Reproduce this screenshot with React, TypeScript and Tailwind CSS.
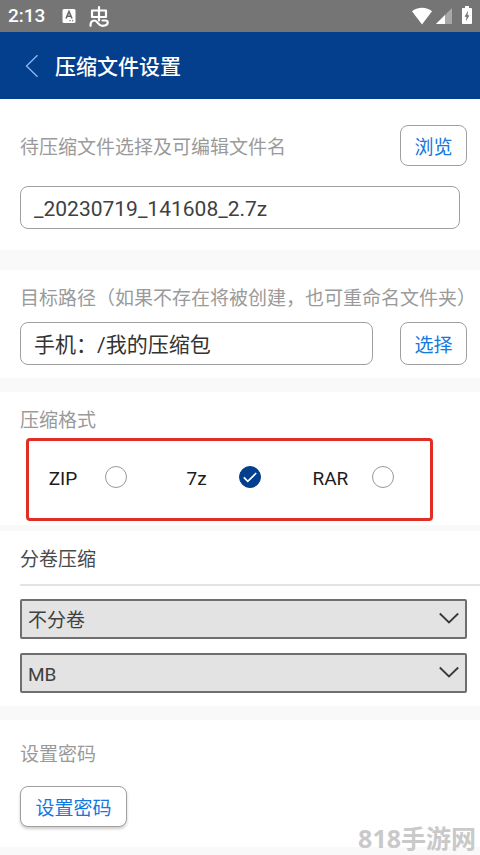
import {useState} from "react";
import type {ReactNode} from "react";

type FormatId = "zip" | "7z" | "rar";

const FORMATS: {id: FormatId; label: string}[] = [
    {id: "zip", label: "ZIP"},
    {id: "7z", label: "7z"},
    {id: "rar", label: "RAR"},
];

const StatusBar = () => (
    <div className="flex h-8 items-center bg-[#757575] pr-2 pl-2 text-white">
        <span className="text-[19px] leading-8 font-medium">2:13</span>
        <svg className="ml-4 h-4 w-4" viewBox="0 0 16 16" aria-hidden="true">
            <rect x="1.5" y="1" width="13" height="14" rx="1.5" fill="#fff" />
            <path d="M5 10.5 8 3.5l3 7M6 8.3h4" fill="none" stroke="#666" strokeWidth="1.6" />
            <path d="M8.5 12.7h1.2M11 12.7h1.2" stroke="#757575" strokeWidth="1.2" />
        </svg>
        <svg className="ml-3 h-6 w-5" viewBox="0 0 20 24" fill="none" stroke="#fff" strokeWidth="2.2" strokeLinecap="round" strokeLinejoin="round" aria-hidden="true">
            <path d="M3 6.500h14v6.500H3zM10 3v13.500" />
            <path d="M1.500 21.800c0-3.300 1.600-5.300 4-5.300 3.300 0 3.300 5.300 8 5.300 3.300 0 5.200-1.300 5.200-3.200 0-1.400-.9-2.100-2.200-2.100h-3" />
        </svg>
        <div className="ml-auto flex items-center">
            <svg className="h-5 w-5" viewBox="0 0 20 20" fill="#fff" aria-hidden="true">
                <path d="M10 18.500 0 5.200C2.600 3 6.100 1.800 10 1.800s7.400 1.200 10 3.400z" />
            </svg>
            <svg className="ml-1 h-5 w-4" viewBox="0 0 16 20" aria-hidden="true">
                <path d="M16 2v16H0z" fill="#a8a8a8" />
                <path d="M9 9v9H0z" fill="#fff" />
            </svg>
            <svg className="ml-2.5 h-5 w-2.5" viewBox="0 0 10 20" aria-hidden="true">
                <path d="M3 0h4v2h2.200c.5 0 .8.300.8.800v14.400c0 .5-.3.800-.8.800H.8c-.5 0-.8-.3-.8-.8V2.800c0-.5.300-.8.800-.8H3z" fill="#fff" />
                <path d="M6.200 4.500 2.500 10.800h2l-.7 4.700 3.700-6.300h-2z" fill="#757575" />
            </svg>
        </div>
    </div>
);

const Section = ({className, children}: {className: string; children: ReactNode}) => <section className={`bg-white pl-5 ${className}`}>{children}</section>;

const OutlineButton = ({className, children}: {className: string; children: ReactNode}) => (
    <button type="button" className={`shrink-0 rounded-lg border border-[#a0a0a0] bg-white pt-1.5 text-[19px] text-[#1378df] ${className}`}>
        {children}
    </button>
);

const SelectBox = ({label, options}: {label: string; options: string[]}) => (
    <div className="relative">
        <select aria-label={label} className="block h-10 w-full appearance-none rounded-xs border-2 border-[#6e6e6e] bg-[#e3e3e3] px-1.5 pt-1 text-[19px] text-[#404040]">
            {options.map(o => (
                <option key={o}>{o}</option>
            ))}
        </select>
        <svg className="pointer-events-none absolute top-[13px] right-2 h-3 w-5" viewBox="0 0 20 12" fill="none" stroke="#383838" strokeWidth="1.8" aria-hidden="true">
            <path d="M.8 1.500 10 10.500l9.200-9" />
        </svg>
    </div>
);

export default function App() {
    const [format, setFormat] = useState<FormatId>("7z");

    return (
        <main className="relative w-full overflow-x-hidden bg-[#f9f9f9] font-[Roboto,'Noto_Sans_CJK_SC',sans-serif]">
            <StatusBar />

            <header className="flex h-[67px] items-center bg-[#043f8e] pl-6 text-white">
                <button type="button" aria-label="返回" className="h-6 w-4">
                    <svg className="h-6 w-4" viewBox="0 0 16 24" fill="none" stroke="#8fb8f5" strokeWidth="1.300" aria-hidden="true">
                        <path d="M13.500 1.200 2.500 12l11 10.800" />
                    </svg>
                </button>
                <h1 className="ml-[15px] pt-1 text-[21px] font-medium">压缩文件设置</h1>
            </header>

            <Section className="pt-[26px] pr-5 pb-[21px]">
                <div className="-mr-[7px] flex items-center justify-between">
                    <label htmlFor="file-name" className="pt-1.5 text-[19px] whitespace-nowrap text-[#9a9a9a]">
                        待压缩文件选择及可编辑文件名
                    </label>
                    <OutlineButton className="h-[41px] w-[67px]">浏览</OutlineButton>
                </div>
                <input id="file-name" defaultValue="_20230719_141608_2.7z" className="mt-5 block h-[43px] w-full rounded-lg border border-[#a0a0a0] px-[13px] pt-0.5 text-[21px] text-[#404040]" />
            </Section>

            <Section className="mt-5 pt-3.5 pr-[13px] pb-[13px]">
                <label htmlFor="target-path" className="block text-[19px] leading-[29px] whitespace-nowrap text-[#9a9a9a]">
                    目标路径（如果不存在将被创建，也可重命名文件夹）
                </label>
                <div className="mt-[9px] flex gap-[27px]">
                    <input id="target-path" defaultValue="手机：/我的压缩包" className="h-[43px] min-w-0 flex-1 rounded-lg border border-[#a0a0a0] px-[13px] pb-0.5 text-[21px] text-[#333]" />
                    <OutlineButton className="h-[43px] w-[67px]">选择</OutlineButton>
                </div>
            </Section>

            <Section className="mt-3.5 pt-3.5 pb-1">
                <h2 className="text-[19px] leading-[29px] text-[#9a9a9a]">压缩格式</h2>
                <div role="radiogroup" aria-label="压缩格式" className="mt-[3px] mr-[47px] ml-1.5 grid grid-cols-3 rounded-sm border-3 border-[#e02e24] pt-[25px] pb-[30px]">
                    {FORMATS.map(f => (
                        <label key={f.id} className="flex h-[22px] items-center gap-2">
                            <span className="w-17 pt-1 text-center text-[19px] text-[#1c1c1c]">{f.label}</span>
                            <span className="grid h-[22px] w-[22px] place-items-center">
                                <input
                                    type="radio"
                                    name="format"
                                    checked={format === f.id}
                                    onChange={() => setFormat(f.id)}
                                    className="col-start-1 row-start-1 h-[22px] w-[22px] appearance-none rounded-full border border-[#999] checked:border-[#043f8e] checked:bg-[#043f8e]"
                                />
                                {format === f.id ? (
                                    <svg className="pointer-events-none z-10 col-start-1 row-start-1 h-[22px] w-[22px]" viewBox="0 0 22 22" fill="none" stroke="#fff" strokeWidth="1.700" aria-hidden="true">
                                        <path d="m4.800 11.300 4 4 8.400-8.300" />
                                    </svg>
                                ) : null}
                            </span>
                        </label>
                    ))}
                </div>
            </Section>

            <Section className="mt-1.5 pt-3.5 pb-[13px]">
                <h2 className="border-b-2 border-[#e3e3e3] pb-2.5 text-[19px] leading-[29px] text-[#4a4a4a]">分卷压缩</h2>
                <div className="mt-[13px] mr-[13px] flex flex-col gap-3.5">
                    <SelectBox label="分卷方式" options={["不分卷", "自定义"]} />
                    <SelectBox label="分卷单位" options={["MB", "KB", "GB"]} />
                </div>
            </Section>

            <Section className="mt-3.5 pt-5 pb-5">
                <h2 className="text-[19px] leading-[29px] text-[#9a9a9a]">设置密码</h2>
                <OutlineButton className="mt-[17px] block h-[41px] w-[107px] shadow-[0_2px_3px_rgba(0,0,0,0.2)]">设置密码</OutlineButton>
            </Section>

            <div className="h-2" />

            <div className="pointer-events-none absolute right-1 bottom-0 font-['Noto_Sans','Noto_Sans_CJK_SC',sans-serif] text-[25px] leading-[34px] font-bold text-[#c9c9c9]">818手游网</div>
        </main>
    );
}
